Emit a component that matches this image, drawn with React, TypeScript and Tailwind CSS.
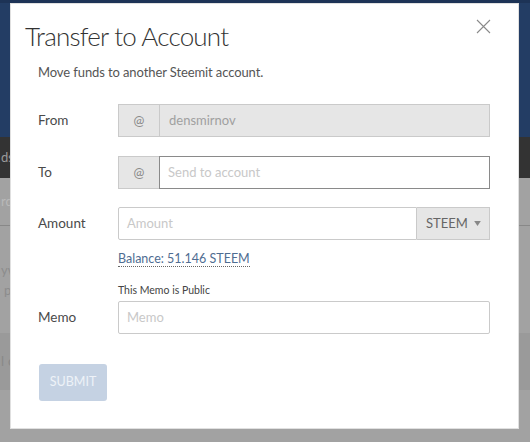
import React from 'react';

const font = { fontFamily: '"Lato", "Open Sans", "Liberation Sans", sans-serif' };

interface RowProps {
  label: string;
  children: React.ReactNode;
  className?: string;
}

const Row: React.FC<RowProps> = ({ label, children, className = '' }) => (
  <div className={`flex items-center ${className}`}>
    <div className="w-[80px] shrink-0 text-[13.5px] text-[#4a4a4a]">{label}</div>
    <div className="flex-1">{children}</div>
  </div>
);

const AtAddon = () => (
  <div className="flex w-[41px] shrink-0 items-center justify-center border border-r-0 border-[#cacaca] bg-[#e6e6e6] text-[13px] text-[#8a8a8a]">
    @
  </div>
);

const Backdrop = () => (
  <div className="flex h-full flex-col text-[13px]">
    <div className="h-[3px] bg-[#1d3356]" />
    <div className="h-[134px] bg-[#233d64]" />
    <div className="flex h-[41px] items-center bg-[#333333] pl-[1px] text-[#9a9a9a]">
      <span>ds</span>
    </div>
    <div className="flex h-[48px] items-center border-b border-[#888] bg-[#a2a2a2] pl-[1px] text-[#b9b9b9]">
      <span>rd</span>
    </div>
    <div className="flex h-[107px] flex-col justify-center bg-[#a2a2a2] pl-[1px] leading-[20px] text-[#8c8c8c]">
      <span>yw</span>
      <span className="ml-[3px]">p</span>
    </div>
    <div className="flex h-[57px] items-center bg-[#9a9a9a] pl-[1px] text-[#888]">
      <span className="tracking-[4px]">lc</span>
    </div>
    <div className="flex-1 bg-[#a2a2a2]" />
  </div>
);

export default function App() {
  return (
    <div className="relative h-[442px] w-[530px] overflow-hidden bg-[#a2a2a2]" style={font}>
      <Backdrop />
      <div className="absolute left-[10px] top-[3px] h-[426px] w-[509px] border border-[#e0e0e0] bg-white pl-[27px] pr-[28px]">
        <button className="absolute right-[27px] top-[15px] h-[15px] w-[15px]">
          <svg viewBox="0 0 15 15" className="h-[15px] w-[15px]">
            <path d="M1 1 L14 14 M14 1 L1 14" stroke="#8a8a8a" strokeWidth="1.1" fill="none" />
          </svg>
        </button>

        <h2 className="-ml-[13px] mt-[16px] text-[26px] font-light leading-[32px] tracking-[-0.8px] text-[#333]">
          Transfer to Account
        </h2>
        <p className="mt-[10px] text-[13px] leading-[20px] tracking-[-0.1px] text-[#555]">
          Move funds to another Steemit account.
        </p>

        <Row label="From" className="mt-[22px]">
          <div className="flex h-[33px]">
            <AtAddon />
            <div className="flex flex-1 items-center border border-[#cacaca] bg-[#e6e6e6] px-[9px] text-[13px] text-[#a0a0a0]">
              densmirnov
            </div>
          </div>
        </Row>

        <Row label="To" className="mt-[19px]">
          <div className="flex h-[33px]">
            <AtAddon />
            <div className="flex flex-1 items-center border border-[#8a8a8a] bg-white px-[8px] text-[13px] text-[#c8c8c8]">
              Send to account
            </div>
          </div>
        </Row>

        <Row label="Amount" className="mt-[18px]">
          <div className="flex h-[33px]">
            <div className="flex flex-1 items-center rounded-l-[2px] border border-[#cacaca] bg-white px-[8px] text-[13px] text-[#c8c8c8]">
              Amount
            </div>
            <div className="flex w-[73px] shrink-0 items-center justify-between border border-l-0 border-[#cacaca] bg-[#e6e6e6] pl-[9px] pr-[8px] text-[13px] text-[#666]">
              <span>STEEM</span>
              <svg viewBox="0 0 8 6" className="h-[5px] w-[7px]">
                <path d="M0 0 L8 0 L4 6 Z" fill="#888" />
              </svg>
            </div>
          </div>
        </Row>

        <div className="ml-[80px] mt-[7px] leading-[20px]">
          <span className="border-b border-dotted border-[#666] text-[12.5px] text-[#4f6d92]">
            Balance: 51.146 STEEM
          </span>
        </div>

        <div className="ml-[80px] mt-[14px] text-[10.5px] leading-[14px] text-[#444]">This Memo is Public</div>

        <Row label="Memo" className="mt-[4px]">
          <div className="flex h-[33px] items-center rounded-[2px] border border-[#cacaca] bg-white px-[8px] text-[13px] text-[#c8c8c8]">
            Memo
          </div>
        </Row>

        <button className="ml-[1px] mt-[30px] h-[37px] w-[68px] rounded-[3px] bg-[#c5d2e3] text-[12.5px] uppercase text-[#eef2f8]">
          Submit
        </button>
      </div>
    </div>
  );
}
